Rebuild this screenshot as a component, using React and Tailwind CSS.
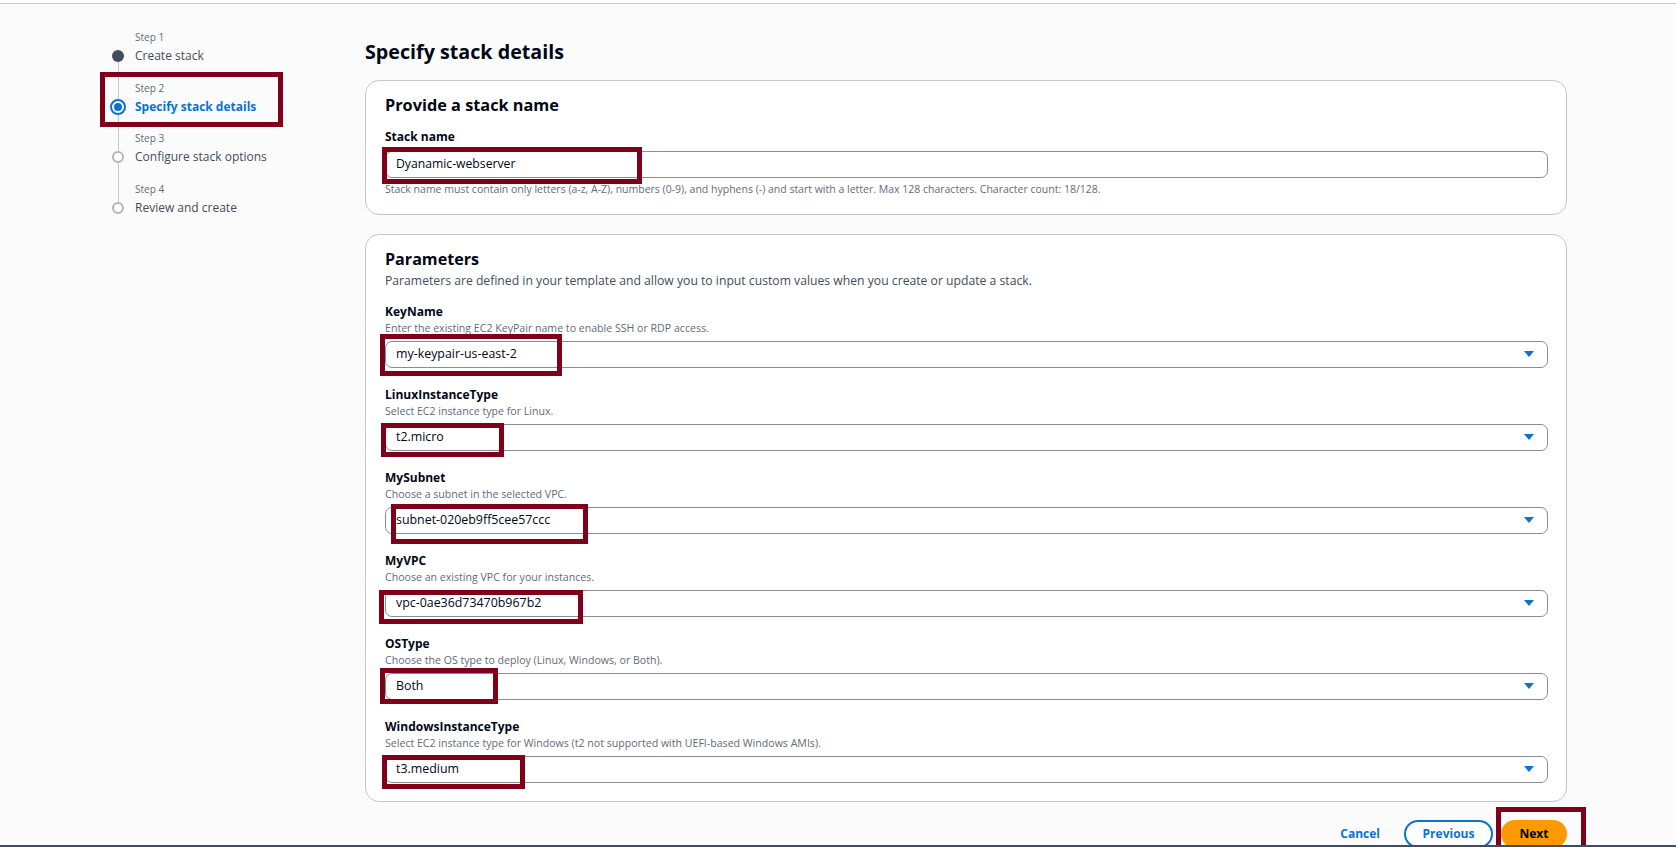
import React from "react";

const steps = [
  { label: "Step 1", title: "Create stack", state: "done" },
  { label: "Step 2", title: "Specify stack details", state: "current" },
  { label: "Step 3", title: "Configure stack options", state: "todo" },
  { label: "Step 4", title: "Review and create", state: "todo" },
];

const fields = [
  { label: "KeyName", desc: "Enter the existing EC2 KeyPair name to enable SSH or RDP access.", value: "my-keypair-us-east-2", box: "left-[-6px] top-[-8px] w-[182px] h-[42px]" },
  { label: "LinuxInstanceType", desc: "Select EC2 instance type for Linux.", value: "t2.micro", box: "left-[-5px] top-[-2px] w-[123px] h-[34px]" },
  { label: "MySubnet", desc: "Choose a subnet in the selected VPC.", value: "subnet-020eb9ff5cee57ccc", box: "left-[5px] top-[-4px] w-[197px] h-[40px]" },
  { label: "MyVPC", desc: "Choose an existing VPC for your instances.", value: "vpc-0ae36d73470b967b2", box: "left-[-7px] top-[-1px] w-[204px] h-[34px]" },
  { label: "OSType", desc: "Choose the OS type to deploy (Linux, Windows, or Both).", value: "Both", box: "left-[-6px] top-[-6px] w-[118px] h-[36px]" },
  { label: "WindowsInstanceType", desc: "Select EC2 instance type for Windows (t2 not supported with UEFI-based Windows AMIs).", value: "t3.medium", box: "left-[-4px] top-[-2px] w-[143px] h-[34px]" },
];

function StepCircle({ state }) {
  if (state === "done") {
    return <div className="w-[12px] h-[12px] rounded-full bg-[#414d5c]" />;
  }
  if (state === "current") {
    return (
      <div className="w-[16px] h-[16px] rounded-full border-2 border-[#0972d3] bg-white flex items-center justify-center">
        <div className="w-[8px] h-[8px] rounded-full bg-[#0972d3]" />
      </div>
    );
  }
  return <div className="w-[12px] h-[12px] rounded-full border-2 border-[#b4b4bb] bg-white" />;
}

function Caret() {
  return (
    <svg width="10" height="7" viewBox="0 0 10 7" className="shrink-0">
      <polygon points="0,0 10,0 5,6" fill="#0972d3" />
    </svg>
  );
}

export default function App() {
  return (
    <div className="w-full h-[847px] overflow-hidden bg-[#fbfbfb] border-b-2 border-[#414d5c] font-['Open_Sans',sans-serif] text-[#000716]">
      <div className="h-[3px] bg-white" />
      <div className="h-px bg-[#c6c6cd]" />
      <div className="flex">
        <nav className="relative ml-[109px] w-[256px] shrink-0 pt-[26px]">
          {steps.map((s, i) => {
            const big = s.state === "current";
            return (
              <div key={s.label} className="flex">
                <div className="w-[18px] flex flex-col items-center shrink-0">
                  <div className={`w-px ${big ? "h-[18px]" : "h-[20px]"} ${i === 0 ? "bg-transparent" : "bg-[#c6c6cd]"}`} />
                  <StepCircle state={s.state} />
                  <div className={`w-px flex-1 ${i === steps.length - 1 ? "bg-transparent" : "bg-[#c6c6cd]"}`} />
                </div>
                <div className="ml-[8px] pb-[15.6px]">
                  <div className="text-[10px] leading-[14px] text-[#5f6b7a]">{s.label}</div>
                  <div className={`mt-[3px] text-[12px] leading-[18px] whitespace-nowrap ${big ? "font-bold text-[#0972d3]" : "text-[#414d5c]"}`}>{s.title}</div>
                </div>
              </div>
            );
          })}
          <div className="absolute left-[-9px] top-[68px] w-[183px] h-[55px] border-[5px] border-[#7f0019]" />
        </nav>

        <main className="flex-1 mr-[109px] pt-[36px]">
          <h1 className="text-[19.7px] leading-[24px] font-bold">Specify stack details</h1>

          <section className="mt-[16px] rounded-[14px] border border-[#c6c6cd] bg-white pl-[19px] pr-[18px] pt-[13px] pb-[18px]">
            <h2 className="text-[16.3px] leading-[22px] font-bold">Provide a stack name</h2>
            <div className="mt-[13px] text-[12px] leading-[16px] font-bold">Stack name</div>
            <div className="relative mt-[6px] h-[27px] flex items-center rounded-[7px] border border-[#8c8c94] bg-white pl-[10px] text-[12.2px]">
              Dyanamic-webserver
              <div className="absolute left-[-4px] top-[-5px] w-[260px] h-[37px] border-[5px] border-[#7f0019]" />
            </div>
            <div className="mt-[4px] text-[10.5px] leading-[14px] text-[#5f6b7a]">
              Stack name must contain only letters (a-z, A-Z), numbers (0-9), and hyphens (-) and start with a letter. Max 128 characters. Character count: 18/128.
            </div>
          </section>

          <section className="mt-[19px] rounded-[14px] border border-[#c6c6cd] bg-white pl-[19px] pr-[18px] pt-[13px] pb-[18px]">
            <h2 className="text-[16.1px] leading-[22px] font-bold">Parameters</h2>
            <p className="mt-[3px] text-[12.2px] leading-[16px] text-[#414d5c]">
              Parameters are defined in your template and allow you to input custom values when you create or update a stack.
            </p>
            {fields.map((f, i) => (
              <div key={f.label} className={i === 0 ? "mt-[15px]" : "mt-[19px]"}>
                <div className="text-[12px] leading-[16px] font-bold">{f.label}</div>
                <div className="mt-[1px] text-[10.6px] leading-[14px] text-[#5f6b7a]">{f.desc}</div>
                <div className="relative mt-[6px] h-[27px] flex items-center justify-between rounded-[7px] border border-[#8c8c94] bg-white pl-[10px] pr-[13px] text-[12.4px]">
                  <span>{f.value}</span>
                  <Caret />
                  <div className={`absolute ${f.box} border-[5px] border-[#7f0019]`} />
                </div>
              </div>
            ))}
          </section>

          <div className="mt-[18px] flex justify-end items-center gap-[8px]">
            <button className="h-[27px] px-[16px] text-[12px] font-bold text-[#0972d3]">Cancel</button>
            <button className="h-[28px] w-[89px] rounded-full border-2 border-[#0972d3] bg-white text-[12px] font-bold text-[#0972d3]">Previous</button>
            <div className="relative">
              <button className="h-[28px] w-[66px] rounded-full bg-[#ff9900] text-[12px] font-bold text-[#000716]">Next</button>
              <div className="absolute left-[-5px] top-[-13px] w-[90px] h-[52px] border-[5px] border-[#7f0019]" />
            </div>
          </div>
        </main>
      </div>
    </div>
  );
}
